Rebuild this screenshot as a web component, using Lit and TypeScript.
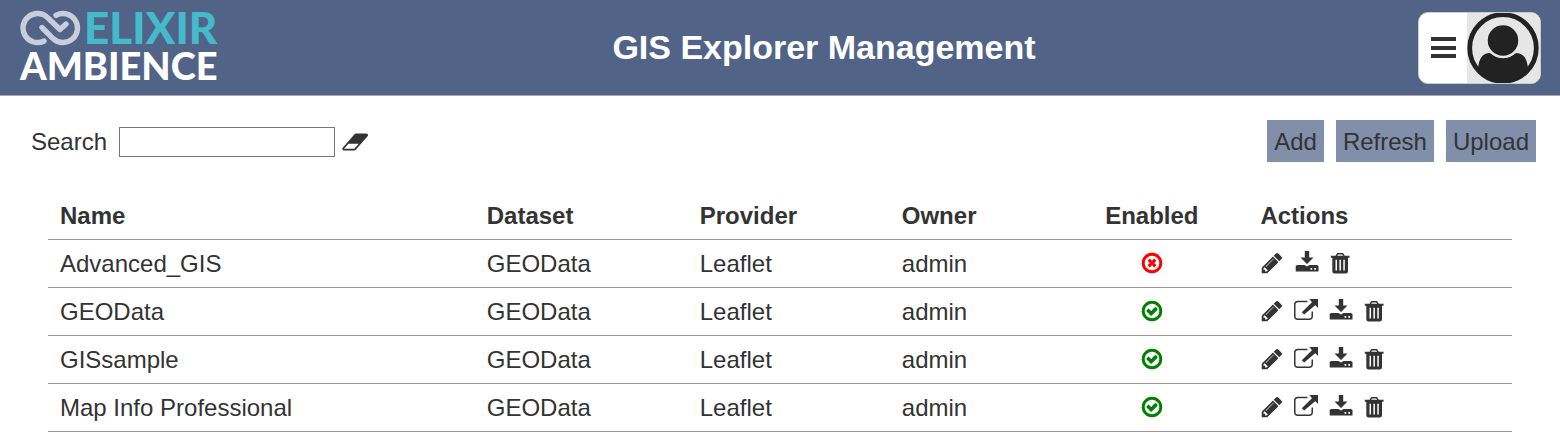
import { LitElement, html, css, svg } from "lit";
import { customElement, property } from "lit/decorators.js";

const icons = {
  pencil: { box: "0 0 1792 1792", w: 24, d: "M491 1536l91-91-235-235-91 91v107h128v128h107zm523-928q0-22-22-22-10 0-17 7l-542 542q-7 7-7 17 0 22 22 22 10 0 17-7l542-542q7-7 7-17zm-54-192l416 416-832 832h-416v-416zm683 96q0 53-37 90l-166 166-416-416 166-165q36-38 90-38 53 0 91 38l235 234q37 39 37 91z" },
  eraser: { box: "0 0 1920 1792", w: 26, d: "M832 1408l336-384h-768l-336 384h768zm1013-1077q15 34 9.500 71.500t-30.500 65.500l-896 1024q-38 44-96 44h-768q-38 0-69.500-20.500t-47.500-54.500q-15-34-9.500-71.500t30.500-65.500l896-1024q38-44 96-44h768q38 0 69.500 20.500t47.500 54.500z" },
  external: { box: "0 0 24 24", w: 24, d: "M13.500 1.700H4Q0 1.700 0 5.700V17Q0 21 4 21H15Q19 21 19 17V12.500H17.500V17Q17.500 19.500 15 19.500H4Q1.500 19.500 1.500 17V5.700Q1.500 3.200 4 3.200H13.500ZM15.300 0H24V8.700L21.200 6.200L10.200 15.500L7.800 13.200L18 3.200Z" },
  download: { box: "0 0 24 24", w: 24, d: "M10.800 0H15.200V6.500H19.500L13 13L6.500 6.500H10.800ZM3 14H10.500L13 15.500L15.500 14H23L24.500 15V20.500H1.700V15ZM16.500 17V18.700H18.200V17ZM20.300 17V18.700H22V17Z" },
  trash: { box: "0 0 24 24", w: 24, d: "M9.300 2H15L16.800 4.700H21.500V6.700H20V20.200Q20 22.500 17.700 22.500H6.600Q4.300 22.500 4.300 20.200V6.700H2.800V4.700H7.500ZM10 3.400L9.200 4.700H15.100L14.300 3.400ZM7.500 8.700V19.500H9V8.700ZM11.400 8.700V19.500H12.900V8.700ZM15.300 8.700V19.500H16.800V8.700Z" },
  check: { box: "0 0 1792 1792", w: 24, d: "M1299 813l-422 422q-19 19-45 19t-45-19l-294-294q-19-19-19-45t19-45l102-102q19-19 45-19t45 19l147 147 275-275q19-19 45-19t45 19l102 102q19 19 19 45t-19 45zm141 83q0-148-73-273t-198-198-273-73-273 73-198 198-73 273 73 273 198 198 273 73 273-73 198-198 73-273zm224 0q0 209-103 385.500t-279.500 279.500-385.500 103-385.500-103-279.500-279.500-103-385.500 103-385.500 279.500-279.500 385.500-103 385.500 103 279.500 279.500 103 385.500z" },
  cross: { box: "0 0 1792 1792", w: 24, d: "M1210 1040L1066 896l144-144q20-23 0-46l-124-124q-23-20-46 0L896 726 752 582q-23-20-46 0L582 706q-20 23 0 46l144 144-144 144q-20 23 0 46l124 124q23 20 46 0l144-144 144 144q23 20 46 0l124-124q20-23 0-46zM1440 896q0-148-73-273t-198-198-273-73-273 73-198 198-73 273 73 273 198 198 273 73 273-73 198-198 73-273zm224 0q0 209-103 385.500t-279.500 279.500-385.500 103-385.500-103-279.500-279.500-103-385.500 103-385.500 279.500-279.500 385.500-103 385.500 103 279.500 279.500 103 385.500z" },
} as const;
type IconName = keyof typeof icons;

@customElement("ui-icon")
class UiIcon extends LitElement {
  static styles = css`
    :host { display: inline-flex; }
    .glyph { display: block; fill: currentColor; overflow: visible; }
  `;
  @property() name: IconName = "pencil";
  render() {
    const icon = icons[this.name];
    return html`<svg class="glyph" aria-hidden="true" width=${icon.w} height="24" viewBox=${icon.box}>
      ${svg`<path fill-rule="evenodd" d=${icon.d}></path>`}
    </svg>`;
  }
}

@customElement("app-header")
class AppHeader extends LitElement {
  static styles = css`
    :host {
      display: grid;
      grid-template-columns: 210px 1fr 123px;
      align-items: center;
      gap: 12px;
      height: 95px;
      padding: 0 19px 0 20px;
      background: #516387;
      border-bottom: 1px solid #a9acb6;
    }
    .brand { display: block; align-self: start; margin-top: 8px; color: #fff; font-family: Lato, sans-serif; font-weight: 900; text-decoration: none; }
    .line { display: flex; align-items: center; height: 38px; font-size: 44px; line-height: 38px; }
    .product { font-size: 38px; }
    .elixir { color: #45bacb; }
    .mark { flex: none; width: 62px; height: 38px; margin-right: 2px; }
    .title { margin: 0; padding-bottom: 2px; text-align: center; color: #fff; font-size: 34px; line-height: 40px; font-weight: bold; }
    .account { display: flex; box-sizing: border-box; width: 123px; height: 72px; padding: 0; border: 1px solid #ccc; border-radius: 10px; overflow: hidden; background: #fff; }
    .bars { flex: none; width: 48px; height: 70px; }
    .avatar { flex: none; width: 73px; height: 70px; background: #e6e6e6; }
  `;
  render() {
    return html`
      <a class="brand" href="#" aria-label="Elixir Ambience">
        <span class="line">
          <svg class="mark" viewBox="0 -1 62 38" fill="none" stroke="#c9cedd" stroke-width="5.400" stroke-linecap="round" stroke-linejoin="round">
            <path d="M24 32A14.500 14.500 0 1 1 28 9L40 20.500L46 15"></path>
            <path d="M36 6.300A14.500 14.500 0 1 1 33 29.500L22 18.500"></path>
          </svg>
          <span class="elixir">ELIXIR</span>
        </span>
        <span class="line product">AMBIENCE</span>
      </a>
      <h1 class="title">GIS Explorer Management</h1>
      <button class="account" aria-label="Account menu">
        <svg class="bars" viewBox="0 0 48 70" fill="#333"><path d="M12 24h25v4H12zM12 33h25v4H12zM12 41h25v4H12z"></path></svg>
        <svg class="avatar" viewBox="0 0 73 70">
          <clipPath id="disc"><circle cx="36" cy="35" r="34"></circle></clipPath>
          <circle cx="36" cy="35" r="33.300" fill="#e6e6e6" stroke="#222" stroke-width="4.800"></circle>
          <path clip-path="url(#disc)" fill="#222" d="M11 56Q12 40 23 40Q36 50 49 40Q60 40 61 56V72H11Z"></path>
          <circle cx="36" cy="27.500" r="16.500" fill="#222" stroke="#e6e6e6" stroke-width="2.500"></circle>
        </svg>
      </button>
    `;
  }
}

interface Explorer { name: string; dataset: string; provider: string; owner: string; enabled: boolean; }

@customElement("app-root")
class AppRoot extends LitElement {
  static styles = css`
    :host { display: block; color: #333; background: #fff; font: 24px/28px "Liberation Sans", Arial, sans-serif; }
    .toolbar { display: flex; align-items: center; justify-content: space-between; padding: 24px 24px 0 31px; }
    .search, .buttons { display: flex; align-items: center; }
    .search { padding-top: 2px; }
    .buttons { gap: 12px; }
    .field { box-sizing: border-box; width: 216px; height: 30px; margin: 0 8px 0 12px; padding: 0 4px; border: 1px solid #767676; font: inherit; }
    .button { height: 42px; padding: 2px 7px 0; border: 0; background: #828fab; color: inherit; font: inherit; }
    .icon { display: inline-flex; padding: 0; border: 0; background: none; color: inherit; }
    .content { padding: 29px 48px 0; }
    .grid { width: 100%; border-collapse: collapse; table-layout: fixed; }
    .cell { box-sizing: border-box; height: 48px; padding: 2px 12px 0; text-align: left; border-bottom: 1px solid #999; }
    .symbols { padding-top: 0; }
    .name { width: 29.150%; }
    .dataset { width: 14.550%; }
    .provider { width: 13.800%; }
    .owner { width: 11.300%; }
    .enabled { width: 13.200%; }
    .center { text-align: center; }
    .status { display: flex; justify-content: center; }
    .on { color: #008000; }
    .off { color: #f00; }
    .actions { display: flex; align-items: center; gap: 10px; }
  `;
  rows: Explorer[] = [
    { name: "Advanced_GIS", dataset: "GEOData", provider: "Leaflet", owner: "admin", enabled: false },
    { name: "GEOData", dataset: "GEOData", provider: "Leaflet", owner: "admin", enabled: true },
    { name: "GISsample", dataset: "GEOData", provider: "Leaflet", owner: "admin", enabled: true },
    { name: "Map Info Professional", dataset: "GEOData", provider: "Leaflet", owner: "admin", enabled: true },
  ];
  action(name: IconName, label: string) {
    return html`<button class="icon" aria-label=${label}><ui-icon name=${name}></ui-icon></button>`;
  }
  row(r: Explorer) {
    return html`<tr>
      <td class="cell">${r.name}</td>
      <td class="cell">${r.dataset}</td>
      <td class="cell">${r.provider}</td>
      <td class="cell">${r.owner}</td>
      <td class="cell symbols"><span class="status ${r.enabled ? "on" : "off"}"><ui-icon name=${r.enabled ? "check" : "cross"} role="img" aria-label=${r.enabled ? "Enabled" : "Disabled"}></ui-icon></span></td>
      <td class="cell symbols"><div class="actions">
        ${this.action("pencil", "Edit")}
        ${r.enabled ? this.action("external", "Open") : ""}
        ${this.action("download", "Download")}
        ${this.action("trash", "Delete")}
      </div></td>
    </tr>`;
  }
  render() {
    return html`
      <app-header></app-header>
      <div class="toolbar">
        <div class="search">
          <label for="search">Search</label>
          <input class="field" id="search" type="text">
          ${this.action("eraser", "Clear search")}
        </div>
        <div class="buttons">
          <button class="button">Add</button>
          <button class="button">Refresh</button>
          <button class="button">Upload</button>
        </div>
      </div>
      <main class="content">
        <table class="grid">
          <thead><tr>
            <th class="cell name">Name</th>
            <th class="cell dataset">Dataset</th>
            <th class="cell provider">Provider</th>
            <th class="cell owner">Owner</th>
            <th class="cell enabled center">Enabled</th>
            <th class="cell">Actions</th>
          </tr></thead>
          <tbody>${this.rows.map((r) => this.row(r))}</tbody>
        </table>
      </main>
    `;
  }
}
